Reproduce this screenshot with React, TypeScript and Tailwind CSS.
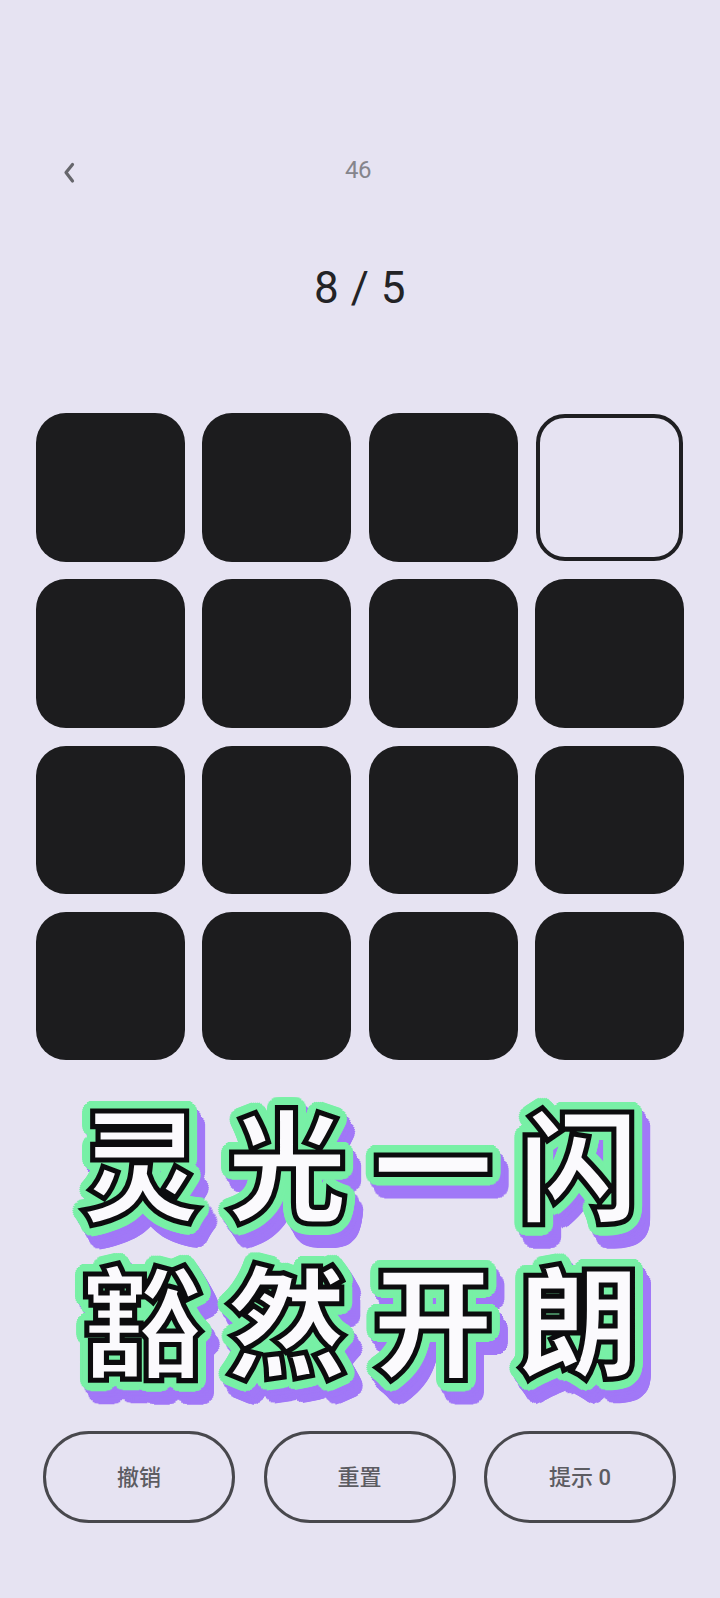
import React from "react";

function ring(r: number, dx: number, dy: number, color: string, n = 32) {
  const out: string[] = [];
  for (let i = 0; i < n; i++) {
    const a = (i / n) * Math.PI * 2;
    out.push(`${(dx + Math.cos(a) * r).toFixed(1)}px ${(dy + Math.sin(a) * r).toFixed(1)}px 0 ${color}`);
  }
  return out;
}

const fontSize = 122;
const strokeWidth = fontSize * 0.042;

const shadow = [
  ...ring(4, 0, 0, "#78f0a6"),
  ...ring(7.5, 0, 0, "#78f0a6"),
  ...ring(10.5, 0, 0, "#78f0a6"),
  ...ring(7, 4, 6, "#a178f7"),
  ...ring(10.5, 4, 6, "#a178f7"),
  ...ring(10.5, 8, 13, "#a178f7"),
].join(",");

function CaptionLine({ text }: { text: string }) {
  return (
    <div
      className="flex justify-center gap-[24px] h-[156px] items-center text-[122px] leading-none font-black text-[#fbfafd] [font-family:'Noto_Sans_CJK_SC','Noto_Sans_CJK_JP',sans-serif]"
      style={{ textShadow: shadow, WebkitTextStroke: `${strokeWidth}px #0c0c0e` }}
    >
      {text.split("").map((c, i) => (
        <span key={i}>{c}</span>
      ))}
    </div>
  );
}

export default function App() {
  const cells = Array.from({ length: 16 }, (_, i) => i);
  return (
    <div className="w-[720px] h-[1598px] bg-[#e6e3f2] flex flex-col overflow-hidden [font-family:Roboto,'Noto_Sans_CJK_SC',sans-serif]">
      <div className="relative mt-[155px] h-[30px] flex items-center justify-center">
        <svg className="absolute left-[60px] top-[5px]" width="18" height="26" viewBox="0 0 18 26" fill="none">
          <path d="M12.5 4.5 L6 12.5 L12.5 21" stroke="#66666c" strokeWidth="3.2" strokeLinecap="round" strokeLinejoin="round" />
        </svg>
        <span className="text-[24px] leading-none text-[#85858c] -translate-x-[2px] tracking-[-0.5px]">46</span>
      </div>
      <div className="mt-[77px] h-[52px] flex items-center justify-center text-[44px] leading-none font-normal text-[#232326] tracking-[0.5px]">
        8 / 5
      </div>
      <div className="mt-[99px] ml-[36px] w-[648px] grid grid-cols-4 gap-x-[17.5px] gap-y-[17.75px]">
        {cells.map((i) =>
          i === 3 ? (
            <div key={i} className="h-[148.5px] flex">
              <div className="flex-1 m-[1px] rounded-[29px] border-[4px] border-[#1f1f22]" />
            </div>
          ) : (
            <div key={i} className="h-[148.5px] rounded-[30px] bg-[#1c1c1e]" />
          )
        )}
      </div>
      <div className="mt-[21px] flex flex-col">
        <CaptionLine text="灵光一闪" />
        <CaptionLine text="豁然开朗" />
      </div>
      <div className="mt-[38px] ml-[43px] w-[633px] flex justify-between">
        {["撤销", "重置", "提示 0"].map((t) => (
          <button
            key={t}
            className="w-[192px] h-[92px] rounded-full border-[3px] border-[#48484d] flex items-center justify-center text-[22px] font-medium text-[#5c5c62]"
          >
            {t}
          </button>
        ))}
      </div>
    </div>
  );
}
